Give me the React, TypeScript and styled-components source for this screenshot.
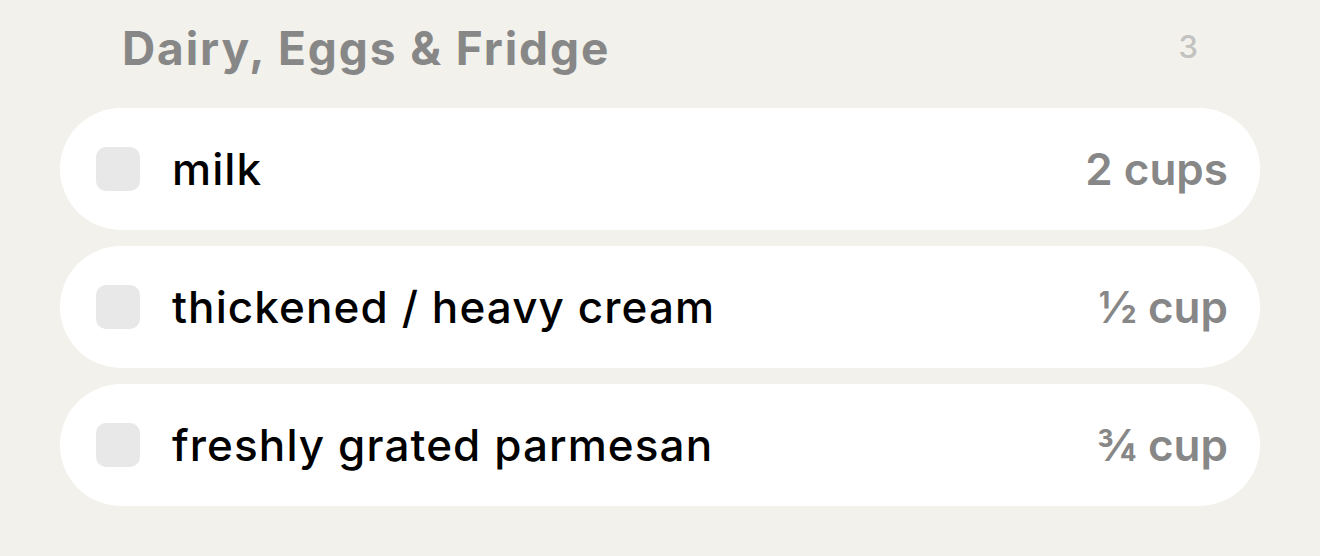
import React from 'react';
import styled, { createGlobalStyle } from 'styled-components';

const GlobalStyle = createGlobalStyle`
  html, body {
    margin: 0;
    padding: 0;
    background: #f2f1eb;
  }
  body {
    font-family: Inter, "Noto Sans", "Liberation Sans", sans-serif;
  }
`;

const Page = styled.div`
  width: 1320px;
  height: 556px;
  box-sizing: border-box;
  padding: 0 60px;
  background: #f2f1eb;
`;

const Section = styled.section`
  display: flex;
  flex-direction: column;
  gap: 16px;
`;

const SectionHeader = styled.div`
  height: 92px;
  box-sizing: border-box;
  padding: 4px 62px 0;
  display: flex;
  align-items: center;
  justify-content: space-between;
`;

const Title = styled.h2`
  margin: 0;
  font-size: 46px;
  font-weight: 700;
  letter-spacing: 1.9px;
  color: #878787;
`;

const Count = styled.span`
  font-size: 31px;
  font-weight: 500;
  color: #c2c2c0;
  margin-top: -4px;
`;

const ItemRow = styled.label`
  height: 122px;
  box-sizing: border-box;
  display: flex;
  align-items: center;
  gap: 32px;
  padding: 0 32px 0 36px;
  background: #ffffff;
  border-radius: 61px;
`;

const Box = styled.span`
  width: 44px;
  height: 44px;
  flex: none;
  border-radius: 10px;
  background: #e8e8e8;
`;

const Name = styled.span`
  flex: 1;
  font-size: 44px;
  font-weight: 500;
  letter-spacing: 1.1px;
  color: #000000;
`;

const Amount = styled.span`
  font-size: 44px;
  font-weight: 600;
  color: #878787;
`;

const items = [
  { name: 'milk', amount: '2 cups' },
  { name: 'thickened / heavy cream', amount: '½ cup' },
  { name: 'freshly grated parmesan', amount: '¾ cup' },
];

export default function App() {
  return (
    <>
      <GlobalStyle />
      <Page>
        <Section>
          <SectionHeader>
            <Title>Dairy, Eggs &amp; Fridge</Title>
            <Count>{items.length}</Count>
          </SectionHeader>
          {items.map((item) => (
            <ItemRow key={item.name}>
              <Box />
              <Name>{item.name}</Name>
              <Amount>{item.amount}</Amount>
            </ItemRow>
          ))}
        </Section>
      </Page>
    </>
  );
}
